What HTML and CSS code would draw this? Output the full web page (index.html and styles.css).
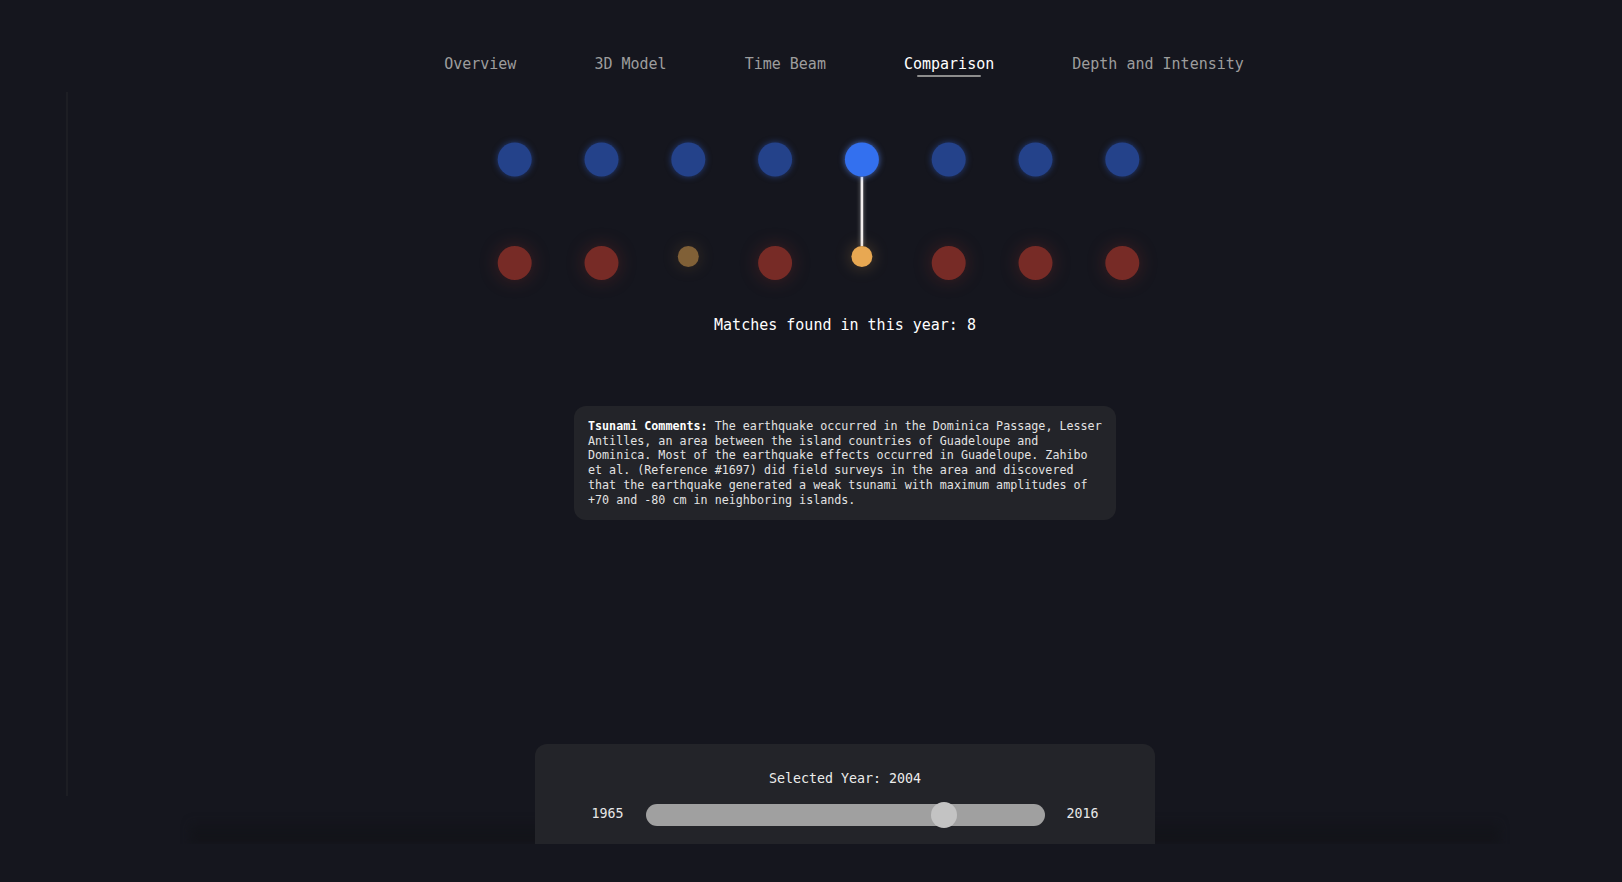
FILE: index.html
```html
<!DOCTYPE html>
<html lang="en">
<head>
  <meta charset="UTF-8">
  <meta name="viewport" content="width=device-width, initial-scale=1.0">
  <title>Earthquakes and Tsunamis - Comparison</title>
  <link rel="stylesheet" href="styles.css">
</head>
<body>
  <div class="app">
    <aside class="sidebar"></aside>

    <main class="main">
      <nav class="tabs">
        <a class="tab">Overview</a>
        <a class="tab">3D Model</a>
        <a class="tab">Time Beam</a>
        <a class="tab active">Comparison</a>
        <a class="tab">Depth and Intensity</a>
      </nav>

      <svg class="comparison-chart" width="800" height="200" viewBox="0 0 800 200">
        <line class="match-link" x1="416.9" y1="76.7" x2="416.9" y2="146"></line>

        <!-- earthquakes -->
        <g>
          <circle class="quake" cx="69.7" cy="59.5" r="17"></circle>
          <circle class="quake" cx="156.5" cy="59.5" r="17"></circle>
          <circle class="quake" cx="243.3" cy="59.5" r="17"></circle>
          <circle class="quake" cx="330.1" cy="59.5" r="17"></circle>
          <circle class="quake selected" cx="416.9" cy="59.5" r="17"></circle>
          <circle class="quake" cx="503.7" cy="59.5" r="17"></circle>
          <circle class="quake" cx="590.5" cy="59.5" r="17"></circle>
          <circle class="quake" cx="677.3" cy="59.5" r="17"></circle>
        </g>

        <!-- tsunamis -->
        <g>
          <circle class="tsunami" cx="69.7" cy="163" r="17"></circle>
          <circle class="tsunami" cx="156.5" cy="163" r="17"></circle>
          <circle class="tsunami matched" cx="243.3" cy="156.5" r="10.5"></circle>
          <circle class="tsunami" cx="330.1" cy="163" r="17"></circle>
          <circle class="tsunami matched selected" cx="416.9" cy="156.5" r="10.5"></circle>
          <circle class="tsunami" cx="503.7" cy="163" r="17"></circle>
          <circle class="tsunami" cx="590.5" cy="163" r="17"></circle>
          <circle class="tsunami" cx="677.3" cy="163" r="17"></circle>
        </g>
      </svg>

      <p class="match-count">Matches found in this year: 8</p>

      <div class="comment-box">
        <p><strong>Tsunami Comments:</strong> The earthquake occurred in the Dominica Passage, Lesser Antilles, an area between the island countries of Guadeloupe and Dominica. Most of the earthquake effects occurred in Guadeloupe. Zahibo et al. (Reference #1697) did field surveys in the area and discovered that the earthquake generated a weak tsunami with maximum amplitudes of +70 and -80 cm in neighboring islands.</p>
      </div>

      <div class="year-footer">
        <div class="footer-shade"></div>
        <div class="year-panel">
          <div class="year-label">Selected Year: 2004</div>
          <div class="year-slider">
            <span class="year-bound">1965</span>
            <input type="range" id="year-range" min="1965" max="2016" value="2004">
            <span class="year-bound">2016</span>
          </div>
        </div>
      </div>
    </main>
  </div>
</body>
</html>
```

FILE: styles.css
```css
body {
  margin: 0;
  background-color: #15161e; /* page background */
  color: #e4e4e4;
  font-family: "DejaVu Sans Mono", monospace;
}
.app {
  display: flex;
  height: 882px;
}
.sidebar {
  flex: none;
  width: 66px;
  height: 704px;
  margin-top: 92px;
  border-right: 2px solid #1d1e24;
}
.main {
  flex: 1;
  display: flex;
  flex-direction: column;
  align-items: center;
  height: 844px;
  overflow: hidden;
}

/* tabs */
.tabs {
  display: flex;
  gap: 78px;
  padding-top: 55px;
  margin-right: 2px;
}
.tab {
  position: relative;
  padding-bottom: 4px;
  font-size: 15px;
  line-height: 18px;
  color: #9d9d9d;
  cursor: pointer;
}
.tab.active {
  color: #ffffff;
}
.tab.active::after {
  content: '';
  position: absolute;
  left: 15%;
  right: 15%;
  bottom: 0;
  height: 2px;
  border-radius: 1px;
  background-color: #8d8d8d;
}

/* chart */
.comparison-chart {
  display: block;
  margin-top: 23px;
  overflow: visible;
}
.match-link {
  stroke: #f2eeee;
  stroke-width: 2.6;
  filter: drop-shadow(0 0 2px rgba(255, 255, 255, 0.45));
}
.quake {
  fill: #24428a;
  filter: drop-shadow(0 0 3px rgba(50, 100, 220, 0.5));
}
.quake.selected {
  fill: #3370ef;
  filter: drop-shadow(0 0 3px rgba(90, 140, 255, 0.7));
}
.tsunami {
  fill: #772b26;
  filter: drop-shadow(0 0 9px rgba(190, 50, 40, 0.25));
}
.tsunami.matched {
  fill: #806037;
  filter: drop-shadow(0 0 8px rgba(200, 140, 60, 0.2));
}
.tsunami.matched.selected {
  fill: #e8a852;
  filter: drop-shadow(0 0 8px rgba(232, 168, 82, 0.3));
}

.match-count {
  margin: 16px 0 0;
  font-size: 15px;
  line-height: 18px;
  color: #ffffff;
}

/* tsunami comments */
.comment-box {
  width: 542px;
  box-sizing: border-box;
  margin-top: 72px;
  padding: 13px 11px 13px 14px;
  border-radius: 12px;
  background-color: #232429;
  font-size: 11.7px;
  line-height: 14.7px;
  color: #e2e2e2;
}
.comment-box p {
  margin: 0;
}
.comment-box strong {
  color: #ffffff;
}

/* year slider */
.year-footer {
  position: relative;
  display: flex;
  justify-content: center;
  width: 100%;
  margin-top: auto;
}
.footer-shade {
  position: absolute;
  left: 122px;
  right: 122px;
  bottom: 0;
  height: 24px;
  background: linear-gradient(to bottom, rgba(18, 19, 24, 0), rgba(18, 19, 24, 0.7) 40%, rgba(18, 19, 24, 0.8));
  filter: blur(4px);
}
.year-panel {
  position: relative;
  width: 620px;
  height: 100px;
  box-sizing: border-box;
  padding-top: 27px;
  border-radius: 12px 12px 0 0;
  background-color: #232429;
  text-align: center;
}
.year-label {
  font-size: 13.3px;
  line-height: 16px;
  color: #ececec;
}
.year-slider {
  display: flex;
  align-items: center;
  justify-content: center;
  gap: 22px;
  margin-top: 15px;
  font-size: 13.3px;
  color: #e8e8e8;
}
.year-bound {
  padding-bottom: 4px;
}
#year-range {
  -webkit-appearance: none;
  appearance: none;
  width: 399px;
  height: 22px;
  margin: 2px 0;
  border-radius: 11px;
  background-color: #a0a0a0;
  outline: none;
}
#year-range::-webkit-slider-thumb {
  -webkit-appearance: none;
  width: 26px;
  height: 26px;
  border-radius: 50%;
  background-color: #c3c3c3;
  cursor: pointer;
}
```
